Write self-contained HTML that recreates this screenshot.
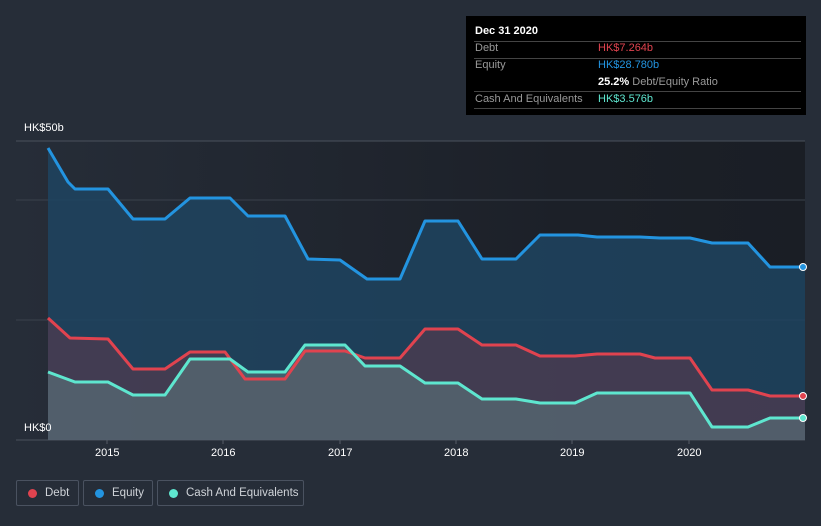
<!DOCTYPE html><html><head><style>
body{margin:0;width:821px;height:526px;background:#262d38;font-family:"Liberation Sans",sans-serif;overflow:hidden;position:relative}
.t{position:absolute;font-size:11px;color:#fff}
.tip{position:absolute;left:466px;top:16px;width:340px;height:99px;background:#000}
.tip div{position:absolute;font-size:11px;white-space:nowrap}
.ln{position:absolute;left:8px;width:327px;height:1px;background:#444}
.lg{position:absolute;top:480px;height:26px;border:1px solid #4a5260;border-radius:2px;color:#cfd3d8;font-size:11.5px;line-height:24px;box-sizing:border-box;white-space:nowrap}
.lg i{position:absolute;left:11px;top:8px;width:9px;height:9px;border-radius:50%}
.lg span{position:absolute;left:28px}
</style></head><body>
<svg width="821" height="526" style="position:absolute;left:0;top:0">
<defs><linearGradient id="bg" x1="0" x2="1" y1="0" y2="0"><stop offset="0" stop-color="#262d38"/><stop offset="0.7" stop-color="#1c2028"/><stop offset="1" stop-color="#1a1e25"/></linearGradient></defs>
<rect x="16" y="141" width="789" height="299" fill="url(#bg)"/>
<line x1="16" y1="141" x2="805" y2="141" stroke="#4a515c"/>
<line x1="16" y1="200" x2="805" y2="200" stroke="#3a414c"/>
<line x1="16" y1="320" x2="805" y2="320" stroke="#3a414c"/>
<line x1="16" y1="440" x2="805" y2="440" stroke="#4a515c"/>
<g stroke-linejoin="round">
<path d="M48,148 L68,182 L75,189 L108,189 L133,219 L165,219 L190,198 L230,198 L248,216 L285,216 L308,259 L340,260 L367,279 L400,279 L425,221 L458,221 L482,259 L516,259 L540,235 L578,235 L597,237 L640,237 L660,238 L690,238 L712,243 L748,243 L770,267 L805,267 L805,440 L48,440Z" fill="#1f4460" fill-opacity=".85"/>
<path d="M48,318 L70,338 L108,339 L133,369 L165,369 L190,352 L225,352 L245,379 L285,379 L305,351 L345,351 L365,358 L400,358 L425,329 L458,329 L482,345 L516,345 L540,356 L575,356 L597,354 L640,354 L655,358 L690,358 L712,390 L748,390 L770,396 L805,396 L805,440 L48,440Z" fill="#5a3a4c" fill-opacity=".6"/>
<path d="M48,372 L75,382 L108,382 L133,395 L165,395 L190,359 L230,359 L248,372 L285,372 L305,345 L345,345 L365,366 L400,366 L425,383 L458,383 L482,399 L516,399 L540,403 L575,403 L597,393 L640,393 L690,393 L712,427 L748,427 L770,418 L805,418 L805,440 L48,440Z" fill="#5f7a80" fill-opacity=".55"/>
<path d="M48,148 L68,182 L75,189 L108,189 L133,219 L165,219 L190,198 L230,198 L248,216 L285,216 L308,259 L340,260 L367,279 L400,279 L425,221 L458,221 L482,259 L516,259 L540,235 L578,235 L597,237 L640,237 L660,238 L690,238 L712,243 L748,243 L770,267 L805,267" fill="none" stroke="#2394e0" stroke-width="3"/>
<path d="M48,318 L70,338 L108,339 L133,369 L165,369 L190,352 L225,352 L245,379 L285,379 L305,351 L345,351 L365,358 L400,358 L425,329 L458,329 L482,345 L516,345 L540,356 L575,356 L597,354 L640,354 L655,358 L690,358 L712,390 L748,390 L770,396 L805,396" fill="none" stroke="#e0434f" stroke-width="3"/>
<path d="M48,372 L75,382 L108,382 L133,395 L165,395 L190,359 L230,359 L248,372 L285,372 L305,345 L345,345 L365,366 L400,366 L425,383 L458,383 L482,399 L516,399 L540,403 L575,403 L597,393 L640,393 L690,393 L712,427 L748,427 L770,418 L805,418" fill="none" stroke="#5ee6cf" stroke-width="3"/>
</g>
<circle cx="803" cy="267" r="3.5" fill="#2394e0" stroke="#fff"/>
<circle cx="803" cy="396" r="3.5" fill="#e0434f" stroke="#fff"/>
<circle cx="803" cy="418" r="3.5" fill="#5ee6cf" stroke="#fff"/>
<g stroke="#555c66"><line x1="107" y1="440" x2="107" y2="444"/><line x1="223" y1="440" x2="223" y2="444"/><line x1="340" y1="440" x2="340" y2="444"/><line x1="456" y1="440" x2="456" y2="444"/><line x1="572" y1="440" x2="572" y2="444"/><line x1="689" y1="440" x2="689" y2="444"/></g>
</svg>
<div class="t" style="left:24px;top:122px">HK$50b</div>
<div class="t" style="left:24px;top:422px">HK$0</div>
<div class="t" style="left:95px;top:447px">2015</div>
<div class="t" style="left:211px;top:447px">2016</div>
<div class="t" style="left:328px;top:447px">2017</div>
<div class="t" style="left:444px;top:447px">2018</div>
<div class="t" style="left:560px;top:447px">2019</div>
<div class="t" style="left:677px;top:447px">2020</div>
<div class="tip">
<div style="left:9px;top:9px;color:#fff;font-weight:bold">Dec 31 2020</div>
<div class="ln" style="top:25px"></div>
<div style="left:9px;top:26px;color:#999">Debt</div><div style="left:132px;top:26px;color:#e0434f">HK$7.264b</div>
<div class="ln" style="top:42px"></div>
<div style="left:9px;top:43px;color:#999">Equity</div><div style="left:132px;top:43px;color:#2394e0">HK$28.780b</div>
<div style="left:132px;top:60px;color:#999"><b style="color:#fff">25.2%</b> Debt/Equity Ratio</div>
<div class="ln" style="top:75px"></div>
<div style="left:9px;top:77px;color:#999">Cash And Equivalents</div><div style="left:132px;top:77px;color:#5ee6cf">HK$3.576b</div>
<div class="ln" style="top:92px"></div>
</div>
<div class="lg" style="left:16px;width:63px"><i style="background:#e0434f"></i><span>Debt</span></div>
<div class="lg" style="left:83px;width:70px"><i style="background:#2394e0"></i><span>Equity</span></div>
<div class="lg" style="left:157px;width:147px"><i style="background:#5ee6cf"></i><span>Cash And Equivalents</span></div>
</body></html>
